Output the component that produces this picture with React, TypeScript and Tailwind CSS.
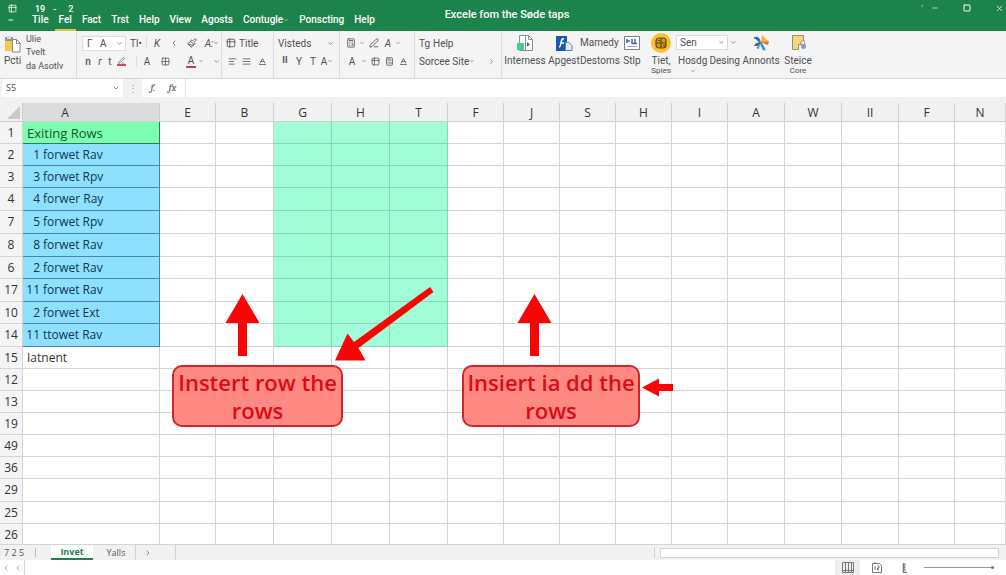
import { ReactNode } from "react"
import { AlignJustify, AlignLeft, Baseline, Calculator, ChevronDown, ChevronLeft, ChevronRight, Grid2x2, Minus, Paintbrush, PenLine, Square, Table2, X } from "lucide-react"
import clsx from "clsx"

const menu = ["Tile", "Fel", "Fact", "Trst", "Help", "View", "Agosts", "Contugle", "Ponscting", "Help"]

const columns = [
  { label: "A", width: "w-[137px]" },
  { label: "E", width: "w-[56px]" },
  { label: "B", width: "w-[58px]" },
  { label: "G", width: "w-[58px]" },
  { label: "H", width: "w-[58px]" },
  { label: "T", width: "w-[58px]" },
  { label: "F", width: "w-[56px]" },
  { label: "J", width: "w-[56px]" },
  { label: "S", width: "w-[56px]" },
  { label: "H", width: "w-[56px]" },
  { label: "I", width: "w-[56px]" },
  { label: "A", width: "w-[57px]" },
  { label: "W", width: "w-[57px]" },
  { label: "II", width: "w-[57px]" },
  { label: "F", width: "w-[56px]" },
  { label: "N", width: "w-auto" },
]

const rows = [
  { id: "1", text: "Exiting Rows", kind: "title" },
  { id: "2", num: "1", text: "forwet Rav", kind: "data" },
  { id: "3", num: "3", text: "forwet Rpv", kind: "data" },
  { id: "4", num: "4", text: "forwer Ray", kind: "data", tall: true },
  { id: "7", num: "5", text: "forwet Rpv", kind: "data", tall: true },
  { id: "8", num: "8", text: "forwet Rav", kind: "data", tall: true },
  { id: "6", num: "2", text: "forwet Rav", kind: "data" },
  { id: "17", num: "11", text: "forwet Rav", kind: "data", tall: true },
  { id: "10", num: "2", text: "forwet Ext", kind: "data" },
  { id: "14", num: "11", text: "ttowet Rav", kind: "data", tall: true },
  { id: "15", text: "Iatnent" },
  { id: "12" },
  { id: "13" },
  { id: "19" },
  { id: "49" },
  { id: "36" },
  { id: "29", tall: true },
  { id: "25" },
  { id: "26" },
]

const Tool = ({ label, className, children }: { label: string, className?: string, children: ReactNode }) => (
  <button aria-label={label} className={clsx("flex h-4 shrink-0 items-center justify-center", className ?? "w-[14px]")}>
    {children}
  </button>
)

const Group = ({ className, children }: { className: string, children: ReactNode }) => (
  <div className={clsx("flex shrink-0 flex-col gap-0.5 border-r border-[#dedede] pt-1", className)}>{children}</div>
)

const Line = ({ children }: { children: ReactNode }) => <div className="flex h-4 items-center">{children}</div>

const Big = ({ icon, label, sub, className }: { icon: ReactNode, label: string, sub?: string, className: string }) => (
  <button className={clsx("flex shrink-0 flex-col items-center pt-0.5", className)}>
    <span className="flex h-5 items-center">{icon}</span>
    <span className="mt-0.5 leading-[11px]">{label}</span>
    {sub && <span className="text-[8px] leading-[10px]">{sub}</span>}
  </button>
)

const PasteIcon = () => (
  <svg width="17" height="18" viewBox="0 0 17 18" aria-hidden="true">
    <path d="M1 2h8v14H1z" fill="#f7c948" />
    <path d="M1 2h8v4H1z" fill="#8e959c" />
    <path d="M3 1h4v3H3z" fill="#d9dde1" />
    <path d="M8.500 4.500h4l3.500 3.500v9h-7.500z" fill="#fff" stroke="#7d858d" />
    <path d="M12.500 4.500v4H16" fill="none" stroke="#7d858d" />
  </svg>
)

const ReportIcon = () => (
  <svg width="18" height="18" viewBox="0 0 18 18" aria-hidden="true">
    <path d="M3.500 1.500h9l4 4v11h-13z" fill="#fff" stroke="#8a9096" />
    <path d="M9.500 1.500v15M12.500 1.500v4h4" fill="none" stroke="#8a9096" />
    <path d="M11 8l3 2.500-3 2z" fill="#59636e" />
    <path d="M1 9h7v7H1z" fill="#43cf8c" />
  </svg>
)

const AppIcon = () => (
  <svg width="18" height="17" viewBox="0 0 18 17" aria-hidden="true">
    <path d="M1 1h11v15H1z" fill="#1f56b0" />
    <path d="M9 4c-2-1-2.500 1-3 4s-1 4-2 4M5 8h4" fill="none" stroke="#fff" strokeWidth="1.500" />
    <path d="M10.500 7.500h3.500l3 3v5h-6.500z" fill="#e8eefb" stroke="#5b7fc4" />
  </svg>
)

const SheetIcon = () => (
  <svg width="16" height="14" viewBox="0 0 16 14" aria-hidden="true">
    <path d="M.5.5h15v13H.5z" fill="#fff" stroke="#77808a" />
    <path d="M3 3v4M3 5h3M8 3v5M8.500 7.500H13M11 3v4" fill="none" stroke="#3d63b5" strokeWidth="1.500" />
    <path d="M3 10.500h10" stroke="#9aa9cf" />
  </svg>
)

const CoinIcon = () => (
  <svg width="20" height="20" viewBox="0 0 20 20" aria-hidden="true">
    <circle cx="10" cy="10" r="10" fill="#fbc02d" />
    <rect x="5" y="5" width="10" height="10" rx="3" fill="#d39b1e" stroke="#5f4612" strokeWidth="1.200" />
    <path d="M5 10h10M10 5v10M7 7.500h2M12 12.500h2" stroke="#5f4612" strokeWidth="1.200" />
  </svg>
)

const PinwheelIcon = () => (
  <svg width="18" height="18" viewBox="0 0 18 18" aria-hidden="true">
    <path d="M8 8C8 4 5 2 2 4c3 0 3 3 6 4z" fill="#1b6fb3" stroke="#1b6fb3" />
    <path d="M10 1l6 6-7 2z" fill="#f9b233" />
    <path d="M9 8l8-1-1 4-3-1z" fill="#e8752a" />
    <path d="M9 7l5 9-3 .5L8 10z" fill="#2d9ad6" />
    <path d="M9 8c-3 0-6 1-7 4h4c1 0 2-2 3-4z" fill="#56606b" />
    <path d="M4 14l4-4-1 5z" fill="#38a1db" />
  </svg>
)

const NoteIcon = () => (
  <svg width="17" height="18" viewBox="0 0 17 18" aria-hidden="true">
    <path d="M2.500 1.500h11v9h-5v5h-6z" fill="#fbd571" stroke="#a8935c" />
    <path d="M2.500 1.500v14" stroke="#7c8fc0" />
    <path d="M10 9l4-3 1 6z" fill="#fff" stroke="#8d98a8" />
    <circle cx="13.500" cy="12.500" r="2.500" fill="#8597d8" />
  </svg>
)

const TitleBar = () => (
  <header className="flex h-[31px] shrink-0 bg-[#1d834c] font-[Roboto,sans-serif] text-white">
    <div className="flex flex-1 flex-col">
      <div className="flex h-[13px] items-center gap-[18px] pt-1 pl-2 text-[9px] font-medium">
        <Table2 size={9} />
        <span className="flex gap-2 leading-2"><span>19</span><span>-</span><span className="pl-1">2</span></span>
      </div>
      <nav className="flex h-[18px] items-stretch pl-2 text-[10px] font-medium">
        <span className="w-5 text-[8px] leading-[14px]">~</span>
        {menu.map((item, i) => (
          <a
            key={i}
            href="#"
            className={clsx(
              "mr-0.5 flex shrink-0 items-center border-b-2 px-1 pb-0.5 leading-3",
              item === "Fel" ? "border-[#e3c33c]" : "border-transparent",
            )}
          >
            {item}
            {item === "Contugle" && <ChevronDown size={6} />}
          </a>
        ))}
      </nav>
    </div>
    <h1 className="pl-2 text-[11px] leading-[30px] font-medium">Excele fom the Søde taps</h1>
    <div className="flex flex-1 items-start justify-end pt-1">
      <span className="mr-2 text-[8px] leading-2">'</span>
      <button aria-label="Minimize" className="mr-6"><Minus size={8} /></button>
      <button aria-label="Maximize" className="mr-6"><Square size={8} strokeWidth={3} /></button>
      <button aria-label="Close" className="mr-0.5"><X size={9} /></button>
    </div>
  </header>
)

const Ribbon = () => (
  <div className="flex h-12 shrink-0 overflow-hidden border-b border-[#d6d6d6] bg-[#f4f4f4] font-[Roboto,sans-serif] text-[10px] text-[#505050]">
    <div className="flex w-[77px] shrink-0 border-r border-[#dedede] pt-1 pl-1">
      <button className="flex w-[22px] flex-col items-start">
        <PasteIcon />
        <span className="mt-0.5 leading-3">Pcti</span>
      </button>
      <div className="-mt-0.5 flex flex-col items-start text-[9px]">
        <button className="leading-[13px]">Ulie</button>
        <button className="leading-[13px]">Tvelt</button>
        <button className="leading-[14px]">da Asotlv</button>
      </div>
    </div>

    <Group className="w-[145px] pl-[5px]">
      <Line>
        <div className="flex h-[15px] w-[46px] items-center border border-[#dcdcdc] bg-white">
          <select aria-label="Font" className="w-full appearance-none bg-transparent pl-1 leading-[13px]">
            <option>Γ &nbsp; A</option>
          </select>
          <ChevronDown size={7} className="mr-0.5 shrink-0" />
        </div>
        <Tool label="Size" className="ml-1 w-3">Tl•</Tool>
        <span className="mx-1 h-3 border-l border-[#dedede]" />
        <Tool label="Kerning" className="w-3 italic">K</Tool>
        <Tool label="Shrink" className="w-[22px]"><ChevronLeft size={8} /></Tool>
        <Tool label="Brush"><Paintbrush size={10} /></Tool>
        <Tool label="Style" className="ml-1 w-[18px]"><span className="italic">A:</span><ChevronDown size={6} /></Tool>
      </Line>
      <Line>
        <Tool label="Bold" className="w-3 font-medium">n</Tool>
        <Tool label="Italic" className="w-3 italic">r</Tool>
        <Tool label="Underline" className="w-2">t</Tool>
        <Tool label="Draw"><PenLine size={9} className="border-b-2 border-[#d9485a]" /></Tool>
        <span className="ml-2 h-3 border-l border-[#dedede]" />
        <Tool label="Font case" className="w-5">A</Tool>
        <Tool label="Borders" className="w-4"><Grid2x2 size={9} /></Tool>
        <Tool label="Font color" className="ml-2 w-7"><span className="border-b-2 border-[#c2405c] px-0.5 leading-[11px]">A</span><ChevronDown size={6} className="ml-0.5" /></Tool>
        <Tool label="More"><ChevronDown size={7} /></Tool>
      </Line>
    </Group>

    <Group className="w-[52px] pl-1">
      <Line>
        <Table2 size={10} />
        <span className="ml-[3px]">Title</span>
      </Line>
      <Line>
        <Tool label="Align left" className="w-3"><AlignLeft size={9} /></Tool>
        <Tool label="Justify" className="w-4"><AlignJustify size={9} /></Tool>
        <Tool label="Orientation" className="w-4"><Baseline size={9} /></Tool>
      </Line>
    </Group>

    <Group className="w-[66px] pl-1">
      <Line>
        <button className="flex w-[56px] items-center justify-between">Visteds <ChevronDown size={7} /></button>
      </Line>
      <Line>
        <Tool label="Lines"><span className="text-[9px] font-bold">II</span></Tool>
        <Tool label="Filter">Y</Tool>
        <Tool label="Text">T</Tool>
        <Tool label="Find">A<ChevronDown size={6} /></Tool>
      </Line>
    </Group>

    <Group className="w-[75px] pl-1">
      <Line>
        <Tool label="Calculate"><Calculator size={10} /></Tool>
        <Tool label="Calculate options" className="w-2"><ChevronDown size={6} /></Tool>
        <Tool label="Format" className="w-4"><PenLine size={10} /></Tool>
        <Tool label="Slant" className="w-3 italic">A</Tool>
        <Tool label="Slant options" className="w-2"><ChevronDown size={6} /></Tool>
      </Line>
      <Line>
        <Tool label="Letter" className="w-4">A</Tool>
        <Tool label="Letter options" className="w-2"><ChevronDown size={6} /></Tool>
        <Tool label="Insert table"><Table2 size={9} /></Tool>
        <Tool label="Grid"><Calculator size={9} /></Tool>
        <Tool label="Fill"><Baseline size={9} /></Tool>
      </Line>
    </Group>

    <Group className="w-[87px] pl-1">
      <Line>
        <span className="w-[14px]">Tg</span>
        <button>Help</button>
      </Line>
      <Line>
        <button className="flex w-[58px] items-center">Sorcee Site<ChevronDown size={6} /></button>
        <Tool label="Expand" className="ml-2 w-3"><ChevronRight size={7} /></Tool>
      </Line>
    </Group>

    <Big icon={<ReportIcon />} label="Interness" className="w-[46px]" />
    <Big icon={<AppIcon />} label="Apgest" className="w-8" />
    <div className="flex w-9 shrink-0 flex-col items-start pt-0.5">
      <button className="leading-5">Mamedy</button>
      <button className="mt-0.5 leading-[11px]">Destoms</button>
    </div>
    <Big icon={<SheetIcon />} label="Stlp" className="w-[32px]" />
    <Big icon={<CoinIcon />} label="Tiet," sub="Spies" className="w-[26px]" />
    <div className="flex w-[66px] shrink-0 flex-col pt-1 pl-0.5">
      <div className="flex items-center">
        <div className="flex h-[15px] w-[52px] shrink-0 items-center border border-[#dcdcdc] bg-white">
          <select aria-label="Style name" className="w-full appearance-none bg-transparent pl-[3px] leading-[13px]">
            <option>Sen</option>
          </select>
          <ChevronDown size={7} className="mr-0.5 shrink-0" />
        </div>
        <ChevronDown size={7} className="ml-0.5" />
      </div>
      <div className="mt-[5px] flex justify-between pl-0.5 leading-[11px]">
        <button className="flex flex-col items-center">Hosdg<ChevronDown size={6} className="mt-0.5" /></button>
        <button className="self-start">Desing</button>
      </div>
    </div>
    <Big icon={<PinwheelIcon />} label="Annonts" className="w-[42px]" />
    <Big icon={<NoteIcon />} label="Steice" sub="Core" className="w-8" />
  </div>
)

const FormulaBar = () => (
  <div className="flex h-[24px] shrink-0 items-start bg-[#f1f1f1] text-[10px] text-[#505050]">
    <div className="ml-0.5 flex h-[18px] w-[121px] items-center bg-white">
      <input aria-label="Name box" defaultValue="S5" className="w-full min-w-0 pl-1 text-[9px] outline-none" />
      <ChevronDown size={8} className="mr-[3px] shrink-0" />
    </div>
    <span className="w-[19px] text-center leading-[18px] text-[#999]">⋮</span>
    <div className="flex h-[18px] w-[44px] items-center justify-around border-r border-[#dedede] bg-white px-0.5 font-serif text-[11px] italic">
      <button>f.</button>
      <button>fx</button>
    </div>
    <input aria-label="Formula" className="h-[18px] min-w-0 flex-1 bg-white px-1 outline-none" />
  </div>
)

const Callout = ({ className, children }: { className: string, children: ReactNode }) => (
  <div className={clsx("absolute top-[262px] flex h-[62px] items-center justify-center rounded-[10px] border-2 border-[#d0262b] bg-[#ff8a84] text-center text-[22px] leading-7 font-semibold whitespace-nowrap text-[#dc0a14]", className)}>
    <p>{children}</p>
  </div>
)

const Sheet = () => (
  <main className="relative min-h-0 flex-1 overflow-hidden bg-white">
    <table className="w-full table-fixed border-separate border-spacing-0 text-[12px] text-[#333]">
      <colgroup>
        <col className="w-[23px]" />
        {columns.map((c, i) => <col key={i} className={c.width} />)}
      </colgroup>
      <thead>
        <tr className="h-[19px] bg-[#f1f1f1]">
          <th className="border-r border-b border-[#cfcfcf] p-0">
            <svg width="22" height="18" className="block" aria-hidden="true"><path d="M20 3v13H7z" fill="#c9c9c9" /></svg>
          </th>
          {columns.map((c, i) => (
            <th
              key={i}
              className={clsx("border-r border-b border-[#cfcfcf] p-0 pt-0.5 leading-4 font-normal", i === 0 && "bg-[#dadbdc] pr-[52px]")}
            >
              {c.label}
            </th>
          ))}
        </tr>
      </thead>
      <tbody>
        {rows.map((row) => (
          <tr key={row.id} className={row.tall ? "h-[23px]" : "h-[22px]"}>
            <th className="border-r border-b border-[#d4d4d4] bg-[#f4f4f4] p-0 text-center leading-5 font-normal">{row.id}</th>
            {columns.map((_, i) => {
              if (i === 0) {
                return (
                  <td
                    key={i}
                    className={clsx(
                      "border-r border-b p-0 leading-5 whitespace-nowrap",
                      row.kind === "title" && "border-[#2f7a50] bg-[#7dfdb0] pl-1 text-[13px] text-[#0d5a2c]",
                      row.kind === "data" && "border-[#4a86a3] bg-[#8de1ff] text-[#12344d]",
                      !row.kind && "border-[#d4d4d4] pl-1",
                    )}
                  >
                    {row.num && <span className="mr-[3px] inline-block w-[17px] text-right">{row.num}</span>}
                    {row.text}
                  </td>
                )
              }
              const marked = row.kind && i >= 3 && i <= 5
              return <td key={i} className={clsx("border-r border-b p-0", marked ? "border-[#8bd6b4] bg-[#a1fdd7]" : "border-[#d4d4d4]")} />
            })}
          </tr>
        ))}
      </tbody>
    </table>

    <svg className="pointer-events-none absolute top-0 left-0 h-full w-full" fill="#f90505" aria-hidden="true">
      <path d="M242.500 191l17 29h-12.500v33h-9v-33h-12.500z" />
      <path d="M534.500 191l17 29h-12.500v33h-9v-33h-12.500z" />
      <path d="M335 257.500l12.500-27 6.500 8.500 76-55 3.500 5-75 56 7 12.500z" />
      <path d="M642 284.500l17-9v5.500h14v7h-14v5.500z" />
    </svg>
    <Callout className="left-[172px] w-[171px]">Instert row the<br />rows</Callout>
    <Callout className="left-[462px] w-[178px]">Insiert ia dd the<br />rows</Callout>
  </main>
)

const SheetTabs = () => (
  <div className="flex h-4 shrink-0 items-center border-t border-[#d4d4d4] bg-[#f1f1f1] text-[9px] text-[#555]">
    <span className="w-9 border-r border-[#bbb] pl-1 leading-[9px]">7 2 5</span>
    <button className="ml-[15px] h-full w-[42px] border-b-2 border-[#1d834c] bg-white leading-3 font-bold text-[#1d834c]">Invet</button>
    <button className="h-full w-[43px] border-r border-[#d4d4d4] pl-1 font-medium">Yalls</button>
    <button aria-label="Next sheet" className="flex h-full w-[40px] items-center border-r border-[#d4d4d4] pl-2"><ChevronRight size={8} /></button>
    <div className="ml-auto flex h-[11px] w-[35%] items-center border-l border-[#d0d0d0] pr-[7px] pl-[5px]">
      <div className="h-[10px] w-full border border-[#d4d4d4] bg-white" />
    </div>
  </div>
)

const StatusBar = () => (
  <footer className="flex h-[15px] shrink-0 items-center bg-white text-[#777]">
    <div className="flex h-full w-[25px] items-center gap-1 border-r border-[#d9d9d9] pl-0.5">
      <button aria-label="Previous"><ChevronLeft size={8} /></button>
      <button aria-label="Back"><ChevronLeft size={8} /></button>
    </div>
    <button aria-label="Normal view" className="ml-auto flex h-full w-[25px] items-center justify-center bg-[#ededed]">
      <svg width="12" height="11" viewBox="0 0 12 11" fill="none" stroke="#777"><path d="M.5.5h11v10H.5zM3.500 1v9M6.500 1v9M9.500 1v9M1 8.500h10" /></svg>
    </button>
    <button aria-label="Page layout" className="ml-3">
      <svg width="10" height="11" viewBox="0 0 10 11" fill="none" stroke="#777"><path d="M.5 1.500h7l2 2v7h-9zM3 4v4M5.500 4h1.500v2H5.500v2H7M3 0v2" /></svg>
    </button>
    <button aria-label="Page break" className="ml-5">
      <svg width="5" height="10" viewBox="0 0 5 10" fill="none" stroke="#777"><path d="M1.500 0v9.500H5M1.500 1.500h2M1.500 4h2M1.500 6.500h2" strokeWidth="1.500" /></svg>
    </button>
    <input
      type="range"
      aria-label="Zoom"
      defaultValue={100}
      className="mr-3 ml-[17px] h-px w-[70px] appearance-none bg-[#999] [&::-webkit-slider-thumb]:size-[3px] [&::-webkit-slider-thumb]:appearance-none [&::-webkit-slider-thumb]:rounded-full [&::-webkit-slider-thumb]:bg-[#777]"
    />
  </footer>
)

const App = () => {
  return (
    <div className="flex h-screen flex-col overflow-hidden bg-white font-['Open_Sans','Noto_Sans',sans-serif]">
      <TitleBar />
      <Ribbon />
      <FormulaBar />
      <Sheet />
      <SheetTabs />
      <StatusBar />
    </div>
  )
}

export default App
